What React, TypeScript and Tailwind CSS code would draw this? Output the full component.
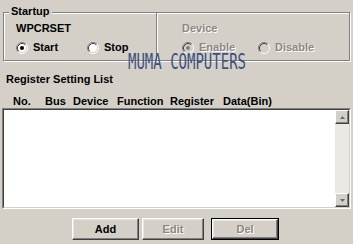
import React from "react";

type RadioProps = {
  checked?: boolean;
  disabled?: boolean;
};

function Radio({ checked, disabled }: RadioProps) {
  return (
    <svg width="12" height="12" viewBox="0 0 12 12" className="shrink-0">
      <circle cx="6" cy="6" r="5" fill={disabled ? "#d4d0c8" : "#fff"} />
      <path d="M2.11 9.89 A5.5 5.5 0 0 1 9.89 2.11" stroke="#808080" fill="none" />
      <path d="M9.89 2.11 A5.5 5.5 0 0 1 2.11 9.89" stroke="#fff" fill="none" />
      <path d="M2.82 9.18 A4.5 4.5 0 0 1 9.18 2.82" stroke="#404040" fill="none" />
      <path d="M9.18 2.82 A4.5 4.5 0 0 1 2.82 9.18" stroke="#d4d0c8" fill="none" />
      {checked ? <circle cx="6" cy="6" r="2" fill={disabled ? "#808080" : "#000"} /> : null}
    </svg>
  );
}

type OptionProps = {
  label: string;
  checked?: boolean;
  disabled?: boolean;
  width: string;
};

function Option({ label, checked, disabled, width }: OptionProps) {
  return (
    <div className={`flex items-center gap-[5px] ${width}`}>
      <Radio checked={checked} disabled={disabled} />
      <span className={disabled ? "text-[#8c8880] [text-shadow:1px_1px_0_#fff]" : "text-black"}>{label}</span>
    </div>
  );
}

type ButtonProps = {
  label: string;
  disabled?: boolean;
  isDefault?: boolean;
  className: string;
};

function WinButton({ label, disabled, isDefault, className }: ButtonProps) {
  const face =
    "flex h-full w-full items-center justify-center border border-t-white border-l-white border-b-[#404040] border-r-[#404040] bg-[#d4d0c8] shadow-[inset_-1px_-1px_0_#808080,inset_1px_1px_0_#e8e6e0]";
  return (
    <div className={`h-[22px] ${className} ${isDefault ? "border border-black" : ""}`}>
      <div className={face}>
        <span className={disabled ? "text-[#8c8880] [text-shadow:1px_1px_0_#fff]" : "text-black"}>{label}</span>
      </div>
    </div>
  );
}

function ScrollButton({ up }: { up?: boolean }) {
  return (
    <div className="flex h-[14px] w-[14px] items-center justify-center border border-t-white border-l-white border-b-[#404040] border-r-[#404040] bg-[#d4d0c8] shadow-[inset_-1px_-1px_0_#808080]">
      <svg width="5" height="3" viewBox="0 0 5 3">
        <path d={up ? "M2.5 0 L5 3 L0 3 Z" : "M0 0 L5 0 L2.5 3 Z"} fill="#6a6a6a" />
      </svg>
    </div>
  );
}

export default function App() {
  const columns = [
    { label: "No.", width: "w-[32px]" },
    { label: "Bus", width: "w-[28px]" },
    { label: "Device", width: "w-[44px]" },
    { label: "Function", width: "w-[53px]" },
    { label: "Register", width: "w-[53px]" },
    { label: "Data(Bin)", width: "" },
  ];

  return (
    <div className="relative h-[244px] w-[353px] overflow-hidden bg-[#d4d0c8] font-['Liberation_Sans',Arial,sans-serif] text-[11px] font-bold leading-[13px] text-black">
      {/* Startup group */}
      <div className="relative ml-[3px] mt-[12px] flex h-[49px] w-[347px] border border-[#808080] shadow-[inset_1px_1px_0_#fff,1px_1px_0_#fff]">
        <span className="absolute left-[5px] top-[-8px] bg-[#d4d0c8] px-[2px]">Startup</span>

        <div className="w-[152px] pl-[12px] pt-[9px]">
          <div>WPCRSET</div>
          <div className="mt-[6px] flex">
            <Option label="Start" checked width="w-[71px]" />
            <Option label="Stop" width="" />
          </div>
        </div>

        <div className="w-[2px] border-l border-r border-l-[#808080] border-r-white" />

        <div className="flex-1 pl-[24px] pt-[9px]">
          <div className="text-[#8c8880] [text-shadow:1px_1px_0_#fff]">Device</div>
          <div className="mt-[6px] flex">
            <Option label="Enable" checked disabled width="w-[76px]" />
            <Option label="Disable" disabled width="" />
          </div>
        </div>
      </div>

      {/* watermark */}
      <div className="pointer-events-none absolute left-[128px] top-[52px] origin-top scale-y-[1.45] font-['DejaVu_Sans_Mono',monospace] text-[14px] font-normal leading-[14px] text-[#3f5180]">
        MUMA COMPUTERS
      </div>

      <div className="ml-[6px] mt-[12px]">Register Setting List</div>

      <div className="ml-[13px] mt-[9px] flex">
        {columns.map((col) => (
          <span key={col.label} className={col.width}>
            {col.label}
          </span>
        ))}
      </div>

      {/* list box */}
      <div className="ml-[2px] flex h-[101px] w-[349px] border border-t-[#808080] border-l-[#808080] border-b-white border-r-white">
        <div className="flex flex-1 border border-t-[#404040] border-l-[#404040] border-b-[#d4d0c8] border-r-[#d4d0c8] bg-white">
          <div className="flex-1" />
          <div className="flex w-[14px] flex-col bg-[#ebe9e4]">
            <ScrollButton up />
            <div className="flex-1" />
            <ScrollButton />
          </div>
        </div>
      </div>

      <div className="mt-[9px] flex">
        <WinButton label="Add" className="ml-[72px] w-[67px]" />
        <WinButton label="Edit" disabled className="ml-[3px] w-[62px]" />
        <WinButton label="Del" disabled isDefault className="ml-[7px] w-[68px]" />
      </div>
    </div>
  );
}
